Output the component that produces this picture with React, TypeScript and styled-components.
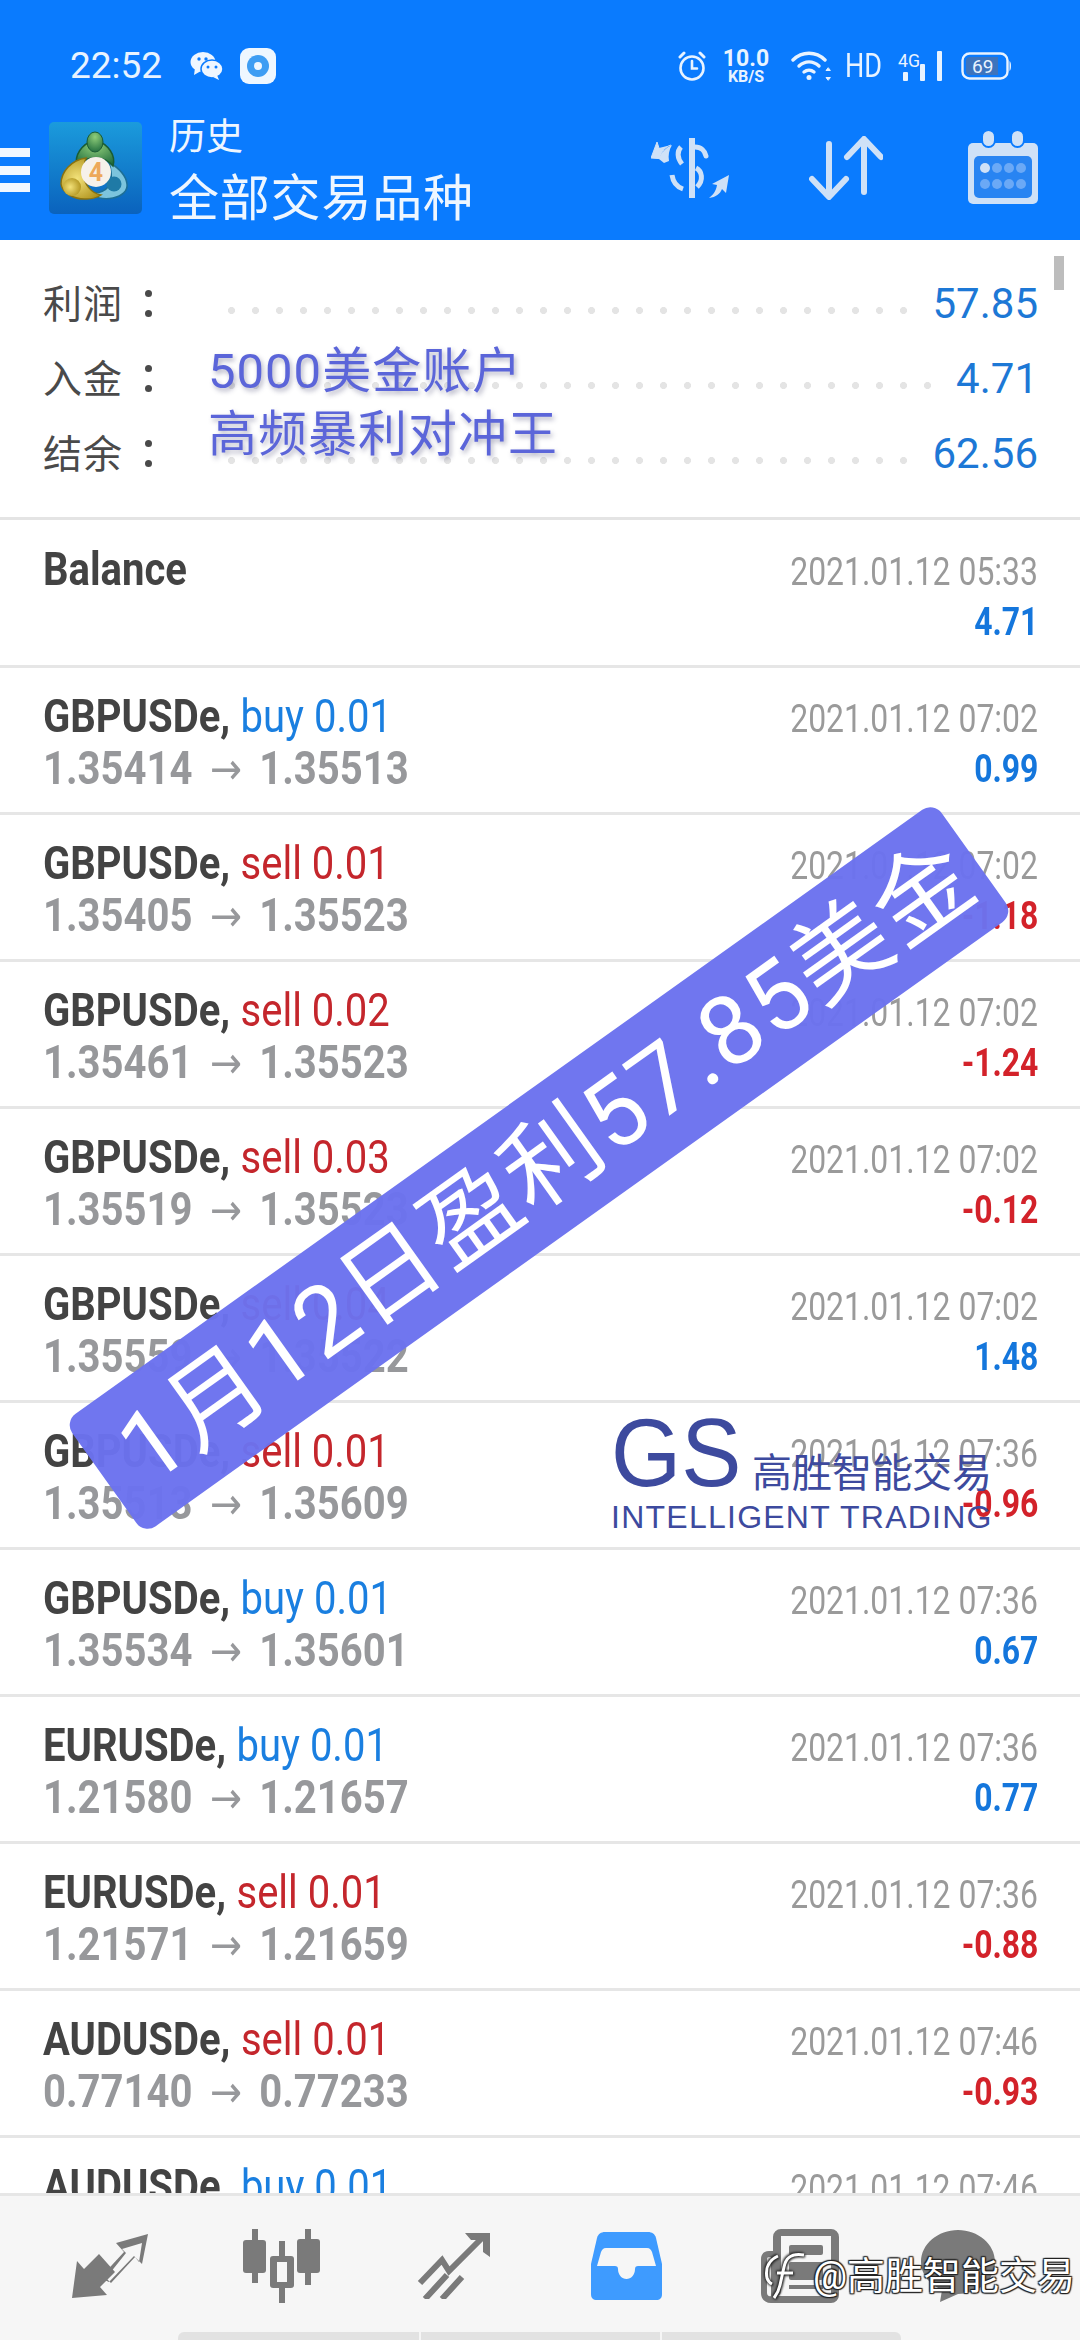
import React from "react";
import styled, { createGlobalStyle } from "styled-components";

const SANS = `Roboto, "Noto Sans CJK SC", sans-serif`;
const ICON = "#cfe1f7";
const BLUE = "#0a7bfe";

const Global = createGlobalStyle`
  html, body { margin: 0; padding: 0; background: #fff; }
  * { box-sizing: border-box; }
`;

const Screen = styled.div`
  position: relative;
  width: 1080px;
  height: 2340px;
  overflow: hidden;
  display: flex;
  flex-direction: column;
  background: #fff;
  font-family: ${SANS};
`;

const Header = styled.header`
  height: 240px;
  flex: none;
  background: ${BLUE};
  padding-top: 48px;
  color: #fff;
`;

const StatusBar = styled.div`
  height: 36px;
  display: flex;
  align-items: center;
  padding: 0 68px 0 70px;
`;

const Clock = styled.span`
  font-size: 37px;
  line-height: 36px;
  color: #e8f3ff;
  margin-right: 28px;
`;

const StatusRight = styled.div`
  margin-left: auto;
  display: flex;
  align-items: center;
`;

const Speed = styled.div`
  width: 48px;
  margin-left: 16px;
  display: flex;
  flex-direction: column;
  align-items: center;
  color: #e8f3ff;
  font-weight: 700;
  font-family: Roboto, sans-serif;
`;

const SpeedValue = styled.span`
  font-size: 23px;
  line-height: 20px;
`;

const SpeedUnit = styled.span`
  font-size: 16px;
  line-height: 15px;
`;

const HdText = styled.span`
  font-size: 33px;
  line-height: 36px;
  margin: 0 17px 0 14px;
  color: #e8f3ff;
  display: inline-block;
  width: 36px;
  transform: scaleX(0.82);
  transform-origin: left;
`;

const Toolbar = styled.div`
  margin-top: 38px;
  height: 92px;
  display: flex;
  align-items: center;
  padding-right: 42px;
`;

const Burger = styled.div`
  width: 30px;
  height: 44px;
  margin-right: 19px;
  margin-top: 4px;
  display: flex;
  flex-direction: column;
  justify-content: space-between;
`;

const BurgerBar = styled.span`
  display: block;
  height: 9px;
  background: #f0f7ff;
`;

const Titles = styled.div`
  margin-left: 27px;
  padding-top: 9px;
  display: flex;
  flex-direction: column;
`;

const SmallTitle = styled.div`
  font-size: 37px;
  line-height: 44px;
  color: #eef6ff;
`;

const BigTitle = styled.div`
  font-size: 50px;
  line-height: 60px;
  margin-top: 9px;
  color: #eef6ff;
  letter-spacing: 0.8px;
`;

const ToolIcons = styled.div`
  margin-left: auto;
  display: flex;
  align-items: center;
`;

const Summary = styled.section`
  position: relative;
  flex: none;
  height: 280px;
  padding: 26px 42px 0 43px;
  border-bottom: 3px solid #e4e4e4;
`;

const SumRow = styled.div`
  height: 75px;
  display: flex;
  align-items: center;
`;

const SumLabel = styled.div`
  width: 184.5px;
  flex: none;
  font-size: 39px;
  letter-spacing: 1px;
  color: #4a4a4a;
  display: flex;
  align-items: center;
`;

const LabelText = styled.span`
  margin-top: -5px;
`;

const Colon = styled.span`
  margin-left: 13px;
  width: 24px;
  height: 27px;
  display: flex;
  flex-direction: column;
  justify-content: space-between;
  align-items: center;
`;

const ColonDot = styled.i`
  display: block;
  width: 7px;
  height: 7px;
  border-radius: 50%;
  background: #4a4a4a;
`;

const Leader = styled.div`
  flex: 1;
  height: 7px;
  margin-top: 14px;
  background-image: radial-gradient(circle at 3.5px 3.5px, #e4e4e4 3.3px, transparent 3.8px);
  background-size: 24px 7px;
  background-repeat: repeat-x;
`;

const SumValue = styled.div`
  margin-left: 25px;
  font-size: 42px;
  line-height: 50px;
  color: #1d78d6;
`;

const Scrollbar = styled.div`
  position: absolute;
  left: 1054px;
  top: 16px;
  width: 10px;
  height: 34px;
  background: #bdbdbd;
`;

const List = styled.main`
  flex: 1;
  min-height: 0;
  overflow: hidden;
  padding-top: 1px;
`;

const Row = styled.article`
  height: 147px;
  border-bottom: 3px solid #e6e6e6;
  display: flex;
  justify-content: space-between;
  padding: 0 42px 0 43px;
`;

const LeftCol = styled.div`
  padding-top: 22px;
`;

const RightCol = styled.div`
  padding-top: 26px;
  display: flex;
  flex-direction: column;
  align-items: flex-end;
`;

const LeftLine = styled.div`
  width: max-content;
  white-space: nowrap;
  font-size: 46px;
  line-height: 52px;
  transform: scaleX(0.87);
  transform-origin: left;
`;

const Symbol = styled.span`
  font-weight: 700;
  color: #434343;
`;

const Trade = styled.span<{ $up: boolean }>`
  color: ${(p) => (p.$up ? "#1a7fe0" : "#c4262c")};
  margin-left: 12px;
`;

const Prices = styled(LeftLine)`
  font-weight: 700;
  color: #97989b;
`;

const PriceArrow = styled.span`
  font-family: "DejaVu Sans", sans-serif;
  font-weight: 400;
  font-size: 44px;
  line-height: 0;
  margin: 0 20px;
`;

const DateText = styled.div`
  width: max-content;
  font-size: 38px;
  line-height: 50px;
  color: #9a9a9a;
  white-space: nowrap;
  transform: scaleX(0.84);
  transform-origin: right;
`;

const Profit = styled(DateText)<{ $up: boolean }>`
  font-weight: 700;
  color: ${(p) => (p.$up ? "#1476dc" : "#d3222a")};
`;

const Note = styled.div`
  position: absolute;
  left: 208px;
  font-size: 49px;
  line-height: 56px;
  color: #5b65d9;
  text-shadow: 2px 3px 5px rgba(40, 40, 90, 0.35);
  white-space: nowrap;
`;

const NoteTop = styled(Note)`
  top: 344px;
  letter-spacing: 1px;
`;

const NoteBottom = styled(Note)`
  top: 407px;
  letter-spacing: 1px;
`;

const Banner = styled.div`
  position: absolute;
  left: 5px;
  top: 1099px;
  width: 1068px;
  height: 138px;
  padding-left: 20px;
  border-radius: 14px;
  background: rgba(107, 114, 238, 0.97);
  color: #fff;
  display: flex;
  align-items: center;
  justify-content: center;
  font-size: 97px;
  line-height: 138px;
  letter-spacing: 2.5px;
  white-space: nowrap;
  transform: rotate(-35.5deg);
`;

const Watermark = styled.div`
  position: absolute;
  left: 611px;
  top: 1410px;
  width: 390px;
  color: #3d4a9e;
`;

const WatermarkTop = styled.div`
  display: flex;
  align-items: flex-end;
  height: 86px;
`;

const WatermarkLogo = styled.span`
  font-family: "Liberation Sans", sans-serif;
  font-size: 97px;
  line-height: 86px;
  width: 141px;
  flex: none;
  transform: scaleX(0.93);
  transform-origin: left;
`;

const WatermarkCn = styled.span`
  font-size: 40px;
  line-height: 48px;
  margin-bottom: -2px;
  white-space: nowrap;
`;

const WatermarkEn = styled.div`
  font-family: "Liberation Sans", sans-serif;
  font-size: 32px;
  line-height: 34px;
  margin-top: 4px;
  letter-spacing: 1.25px;
  white-space: nowrap;
`;

const BottomNav = styled.nav`
  position: relative;
  flex: none;
  height: 147px;
  background: #f6f6f6;
  border-top: 3px solid #e6e6e6;
  display: flex;
  flex-direction: column;
`;

const Tabs = styled.div`
  display: flex;
  align-items: center;
  height: 74px;
  margin-top: 33px;
  padding-left: 72px;
`;

const Tab = styled.span<{ $gap: number }>`
  margin-left: ${(p) => p.$gap}px;
  display: flex;
`;

const Indicator = styled.div`
  margin: auto 0 0 178px;
  width: 723px;
  height: 8px;
  display: grid;
  grid-template-columns: 241px 239px 1fr;
  gap: 2px;
`;

const IndicatorPart = styled.span`
  background: #e2e2e2;
  &:first-child { border-top-left-radius: 6px; }
  &:last-child { border-top-right-radius: 6px; }
`;

const Credit = styled.div`
  position: absolute;
  left: 764px;
  top: 2252px;
  display: flex;
  align-items: center;
  color: #fff;
  font-size: 38px;
  line-height: 48px;
  white-space: nowrap;
  text-shadow: 0 0 2px #222, 1px 1px 1px #222, -1px -1px 1px #222, 1px -1px 1px #222, -1px 1px 1px #222;
`;

const CreditMark = styled.svg`
  margin-right: 7px;
  flex: none;
  filter: drop-shadow(1px 1px 1px #222) drop-shadow(-1px -1px 1px #222);
`;

/* ---------- drawings ---------- */

const WeChat = () => (
  <svg width="33" height="28" viewBox="0 0 33 28" style={{ marginRight: 17 }}>
    <ellipse cx="13" cy="10" rx="12.5" ry="10" fill="#eef6ff" />
    <path d="M5 16l-1 7 7-4z" fill="#eef6ff" />
    <ellipse cx="22" cy="17" rx="11" ry="9" fill="#eef6ff" stroke={BLUE} strokeWidth="1.5" />
    <path d="M27 23l2 5-6-3z" fill="#eef6ff" />
    <circle cx="9" cy="7" r="1.7" fill={BLUE} />
    <circle cx="16" cy="7" r="1.7" fill={BLUE} />
    <circle cx="18" cy="15" r="1.5" fill={BLUE} />
    <circle cx="26" cy="15" r="1.5" fill={BLUE} />
  </svg>
);

const AppBadge = () => (
  <svg width="36" height="36" viewBox="0 0 36 36">
    <rect width="36" height="36" rx="9" fill="#eef7ff" />
    <circle cx="18" cy="18" r="11" fill="#3d9df3" />
    <circle cx="18" cy="18" r="4" fill="#eef7ff" />
  </svg>
);

const Alarm = () => (
  <svg width="28" height="30" viewBox="0 0 28 30" fill="none" stroke="#e8f3ff" strokeWidth="2.6" strokeLinecap="round">
    <circle cx="14" cy="17" r="11.5" />
    <path d="M14 10v7.5h5" />
    <path d="M2 6l4-4M26 6l-4-4" strokeWidth="3" />
  </svg>
);

const Wifi = () => (
  <svg width="40" height="30" viewBox="0 0 40 30" fill="none" stroke="#e8f3ff" strokeWidth="3.4" strokeLinecap="round" style={{ marginLeft: 21 }}>
    <path d="M2 9c9-9 23-9 32 0" />
    <path d="M8 15c6-5.500 14-5.500 20 0" />
    <path d="M13 21c3-2.500 7-2.500 10 0" />
    <circle cx="18" cy="26.500" r="2.500" fill="#e8f3ff" stroke="none" />
    <path d="M37 17l-2 2.500h4zM37 29l-2-2.500h4z" fill="#e8f3ff" stroke="#e8f3ff" strokeWidth="1" />
  </svg>
);

const Signal = () => (
  <svg width="44" height="30" viewBox="0 0 44 30" fill="#e8f3ff">
    <text x="0" y="16" fontSize="18" fontFamily="Roboto, sans-serif" textLength="22" lengthAdjust="spacingAndGlyphs">4G</text>
    <rect x="5" y="21" width="5" height="9" rx="1" />
    <rect x="22" y="13" width="5" height="17" rx="1" />
    <rect x="39" y="0" width="5" height="30" rx="1" />
  </svg>
);

const Battery = () => (
  <svg width="51" height="28" viewBox="0 0 51 28" style={{ marginLeft: 19 }}>
    <rect x="1.500" y="1.500" width="45" height="25" rx="7" fill="none" stroke="#e8f3ff" strokeWidth="2.4" />
    <path d="M5 9a4 4 0 0 1 4-4h28v18H9a4 4 0 0 1-4-4z" fill="#3d74bd" />
    <path d="M48.500 9c2 1 2 9 0 10z" fill="#e8f3ff" />
    <text x="11" y="21" fontSize="19" fontFamily="Roboto, sans-serif" fill="#e8f3ff">69</text>
  </svg>
);

const Mt4Logo = () => (
  <svg width="93" height="92" viewBox="0 0 93 92">
    <defs>
      <linearGradient id="mtbg" x1="0" y1="0" x2="0" y2="1">
        <stop offset="0" stopColor="#1b9bdc" />
        <stop offset="1" stopColor="#0a62bd" />
      </linearGradient>
      <radialGradient id="mtgreen" cx="0.5" cy="0.25" r="0.8">
        <stop offset="0" stopColor="#8fce7a" />
        <stop offset="1" stopColor="#1f6b3c" />
      </radialGradient>
      <radialGradient id="mtyellow" cx="0.4" cy="0.5" r="0.7">
        <stop offset="0" stopColor="#f3e27a" />
        <stop offset="1" stopColor="#a98b14" />
      </radialGradient>
    </defs>
    <rect width="93" height="92" rx="5" fill="url(#mtbg)" />
    <path d="M60 40c8 5 17 12 18 22 1 7-5 12-14 14-9 2-19 0-25-6 8 2 16 0 21-6 4-7 2-16 0-24z" fill="#7cc4dd" stroke="#1d6f96" strokeWidth="1.500" />
    <circle cx="65" cy="62" r="7.500" fill="#1f7aa6" />
    <path d="M46 18C32 22 25 34 28 44c4-5 11-8 18-8s14 3 18 8c3-10-4-22-18-26z" fill="url(#mtgreen)" stroke="#1a5c34" strokeWidth="1.500" />
    <ellipse cx="46" cy="20" rx="8" ry="10" fill="url(#mtgreen)" stroke="#1a5c34" strokeWidth="1" />
    <path d="M37 36C22 38 12 50 12 62c1 9 14 16 26 15 6 0 11-2 14-4-10-2-17-11-17-20 0-6 0-12 2-17z" fill="url(#mtyellow)" stroke="#8a7210" strokeWidth="1.500" />
    <circle cx="23" cy="65" r="9" fill="url(#mtyellow)" />
    <circle cx="47" cy="50" r="15" fill="#f6f1ea" />
    <text x="47" y="59" textAnchor="middle" fontSize="25" fontWeight="700" fontFamily="Roboto, sans-serif" fill="#eda95a">4</text>
  </svg>
);

const ExchangeIcon = () => (
  <svg width="78" height="60" viewBox="0 0 78 60" fill="none" stroke={ICON} strokeWidth="5" style={{ marginRight: 80 }}>
    <path d="M41 0v60" strokeWidth="6" />
    <path d="M44 9c6 0 10 4 11 9" strokeLinecap="round" />
    <path d="M30 9c-4 4-4 11 1 17" />
    <path d="M45 30c6 3 8 12 1 19" />
    <path d="M21 37c1 7 5 12 11 14" />
    <path d="M20 7C14 9 11 13 9 20l5 1-14-1 6-16 2 6" fill={ICON} strokeWidth="1" />
    <path d="M8 21c2-6 6-11 13-14-3 5-4 10-3 16l-5 2z" fill={ICON} stroke="none" />
    <path d="M58 60c4-3 7-7 8-13l-5-1 17-9-3 18-4-4c-2 5-6 8-13 9z" fill={ICON} stroke="none" />
  </svg>
);

const SortIcon = () => (
  <svg width="74" height="64" viewBox="0 0 74 64" fill="none" stroke={ICON} strokeWidth="6" strokeLinecap="round" strokeLinejoin="round" style={{ marginRight: 85 }}>
    <path d="M20 8v52M3 43l17 18 17-18" />
    <path d="M55 56V4M38 21L55 3l17 18" />
  </svg>
);

const CalendarIcon = () => (
  <svg width="70" height="74" viewBox="0 0 70 74" style={{ marginTop: -2 }}>
    <rect x="0" y="13" width="70" height="61" rx="5" fill={ICON} />
    <rect x="6" y="26" width="58" height="42" rx="5" fill="#2884f2" />
    <rect x="14" y="0" width="13" height="17" rx="6.500" fill={ICON} stroke={BLUE} strokeWidth="2" />
    <rect x="43" y="0" width="13" height="17" rx="6.500" fill={ICON} stroke={BLUE} strokeWidth="2" />
    {[0, 1].flatMap((r) =>
      [0, 1, 2, 3].map((c) => (
        <circle key={`${r}${c}`} cx={17 + c * 12} cy={38 + r * 16} r="5" fill={r === 0 && c === 0 ? ICON : "#6ba9f6"} />
      ))
    )}
  </svg>
);

const NavArrows = () => (
  <svg width="76" height="64" viewBox="0 0 76 64" fill="#7a7a7a">
    <path d="M0 64l5-37 7 8 15-15 16 18-15 15 7 8z" />
    <path d="M28 44L52 18l-8-9 32-9-6 30-8-8-25 26zM34 44l5 5 24-26 4 5 3-19-20 6 4 4z" fillRule="evenodd" />
  </svg>
);

const NavCandles = () => (
  <svg width="77" height="74" viewBox="0 0 77 74" fill="#7a7a7a">
    <rect x="9" y="0" width="6" height="54" />
    <rect x="0" y="11" width="23" height="33" rx="3" />
    <rect x="36" y="12" width="6" height="62" />
    <rect x="27" y="27" width="24" height="32" rx="3" />
    <rect x="34" y="33" width="10" height="20" fill="#f6f6f6" />
    <rect x="62" y="0" width="6" height="56" />
    <rect x="54" y="10" width="23" height="34" rx="3" />
  </svg>
);

const NavChart = () => (
  <svg width="73" height="66" viewBox="0 0 73 66" fill="none" stroke="#7a7a7a" strokeWidth="6">
    <path d="M3 50L25 27l7 11L66 4" />
    <path d="M48 0h25v24l-7-5V7H54z" fill="#7a7a7a" strokeWidth="0" />
    <path d="M8 66L30 42M25 66L45 44" />
  </svg>
);

const NavInbox = () => (
  <svg width="71" height="68" viewBox="0 0 71 68">
    <path d="M14 0h43c4 0 7 2 8 6l6 26v30c0 4-2 6-6 6H6c-4 0-6-2-6-6V32L6 6c1-4 4-6 8-6z" fill="#3e9bff" />
    <path d="M15 16h41c3 0 4 2 5 4l4 14H47c-2 0-3 1-3 3 0 6-4 10-8.500 10S27 43 27 37c0-2-1-3-3-3H6l4-14c1-2 2-4 5-4z" fill="#f6f6f6" />
  </svg>
);

const NavNews = () => (
  <svg width="78" height="74" viewBox="0 0 78 74" fill="#7a7a7a">
    <path d="M20 0h50a8 8 0 0 1 8 8v58a8 8 0 0 1-8 8H10C4 74 0 70 0 64V30c0-5 3-8 8-8h4V8a8 8 0 0 1 8-8zm0 7v55c0 3-2 5-4 5h54V7zM6 30v34c0 2 2 4 4 3V28c-2 0-4 0-4 2z" fillRule="evenodd" />
    <rect x="28" y="16" width="34" height="10" rx="2" />
    <rect x="28" y="33" width="34" height="18" rx="2" />
    <rect x="28" y="56" width="34" height="4" />
  </svg>
);

const NavChat = () => (
  <svg width="74" height="72" viewBox="0 0 74 72" fill="#7a7a7a">
    <path d="M37 0c20 0 37 14 37 32S57 64 37 64l-18 8 2-12C8 54 0 44 0 32 0 14 17 0 37 0z" />
  </svg>
);

/* ---------- data ---------- */

type Deal = { sym: string; up: boolean; lots: string; from: string; to: string; date: string; profit: string };

const deals: Deal[] = [
  { sym: "GBPUSDe", up: true, lots: "buy 0.01", from: "1.35414", to: "1.35513", date: "07:02", profit: "0.99" },
  { sym: "GBPUSDe", up: false, lots: "sell 0.01", from: "1.35405", to: "1.35523", date: "07:02", profit: "-1.18" },
  { sym: "GBPUSDe", up: false, lots: "sell 0.02", from: "1.35461", to: "1.35523", date: "07:02", profit: "-1.24" },
  { sym: "GBPUSDe", up: false, lots: "sell 0.03", from: "1.35519", to: "1.35523", date: "07:02", profit: "-0.12" },
  { sym: "GBPUSDe", up: false, lots: "sell 0.04", from: "1.35559", to: "1.35522", date: "07:02", profit: "1.48" },
  { sym: "GBPUSDe", up: false, lots: "sell 0.01", from: "1.35513", to: "1.35609", date: "07:36", profit: "-0.96" },
  { sym: "GBPUSDe", up: true, lots: "buy 0.01", from: "1.35534", to: "1.35601", date: "07:36", profit: "0.67" },
  { sym: "EURUSDe", up: true, lots: "buy 0.01", from: "1.21580", to: "1.21657", date: "07:36", profit: "0.77" },
  { sym: "EURUSDe", up: false, lots: "sell 0.01", from: "1.21571", to: "1.21659", date: "07:36", profit: "-0.88" },
  { sym: "AUDUSDe", up: false, lots: "sell 0.01", from: "0.77140", to: "0.77233", date: "07:46", profit: "-0.93" },
  { sym: "AUDUSDe", up: true, lots: "buy 0.01", from: "0.77140", to: "0.77233", date: "07:46", profit: "0.93" },
];

const summary = [
  { label: "利润", value: "57.85" },
  { label: "入金", value: "4.71" },
  { label: "结余", value: "62.56" },
];

export default function App() {
  return (
    <Screen>
      <Global />
      <Header>
        <StatusBar>
          <Clock>22:52</Clock>
          <WeChat />
          <AppBadge />
          <StatusRight>
            <Alarm />
            <Speed>
              <SpeedValue>10.0</SpeedValue>
              <SpeedUnit>KB/S</SpeedUnit>
            </Speed>
            <Wifi />
            <HdText>HD</HdText>
            <Signal />
            <Battery />
          </StatusRight>
        </StatusBar>
        <Toolbar>
          <Burger>
            <BurgerBar />
            <BurgerBar />
            <BurgerBar />
          </Burger>
          <Mt4Logo />
          <Titles>
            <SmallTitle>历史</SmallTitle>
            <BigTitle>全部交易品种</BigTitle>
          </Titles>
          <ToolIcons>
            <ExchangeIcon />
            <SortIcon />
            <CalendarIcon />
          </ToolIcons>
        </Toolbar>
      </Header>

      <Summary>
        {summary.map((s) => (
          <SumRow key={s.label}>
            <SumLabel>
              <LabelText>{s.label}</LabelText>
              <Colon>
                <ColonDot />
                <ColonDot />
              </Colon>
            </SumLabel>
            <Leader />
            <SumValue>{s.value}</SumValue>
          </SumRow>
        ))}
        <Scrollbar />
      </Summary>

      <List>
        <Row>
          <LeftCol>
            <LeftLine>
              <Symbol>Balance</Symbol>
            </LeftLine>
          </LeftCol>
          <RightCol>
            <DateText>2021.01.12 05:33</DateText>
            <Profit $up>4.71</Profit>
          </RightCol>
        </Row>
        {deals.map((d, i) => (
          <Row key={i}>
            <LeftCol>
              <LeftLine>
                <Symbol>{d.sym},</Symbol>
                <Trade $up={d.up}>{d.lots}</Trade>
              </LeftLine>
              <Prices>
                {d.from}
                <PriceArrow>→</PriceArrow>
                {d.to}
              </Prices>
            </LeftCol>
            <RightCol>
              <DateText>2021.01.12 {d.date}</DateText>
              <Profit $up={!d.profit.startsWith("-")}>{d.profit}</Profit>
            </RightCol>
          </Row>
        ))}
      </List>

      <BottomNav>
        <Tabs>
          <Tab $gap={0}><NavArrows /></Tab>
          <Tab $gap={95}><NavCandles /></Tab>
          <Tab $gap={97}><NavChart /></Tab>
          <Tab $gap={101}><NavInbox /></Tab>
          <Tab $gap={99}><NavNews /></Tab>
          <Tab $gap={82}><NavChat /></Tab>
        </Tabs>
        <Indicator>
          <IndicatorPart />
          <IndicatorPart />
          <IndicatorPart />
        </Indicator>
      </BottomNav>

      <NoteTop>5000美金账户</NoteTop>
      <NoteBottom>高频暴利对冲王</NoteBottom>

      <Watermark>
        <WatermarkTop>
          <WatermarkLogo>GS</WatermarkLogo>
          <WatermarkCn>高胜智能交易</WatermarkCn>
        </WatermarkTop>
        <WatermarkEn>INTELLIGENT TRADING</WatermarkEn>
      </Watermark>

      <Banner>1月12日盈利57.85美金</Banner>

      <Credit>
        <CreditMark width="42" height="48" viewBox="0 0 42 48" fill="none" stroke="#fff" strokeWidth="3">
          <path d="M14 4C5 8 1 16 3 26c1 3 3 5 5 6" />
          <path d="M40 3c-12-2-18 2-20 12l-4 18c-1 5-3 9-6 13" />
          <path d="M13 21h16" />
        </CreditMark>
        @高胜智能交易
      </Credit>
    </Screen>
  );
}
